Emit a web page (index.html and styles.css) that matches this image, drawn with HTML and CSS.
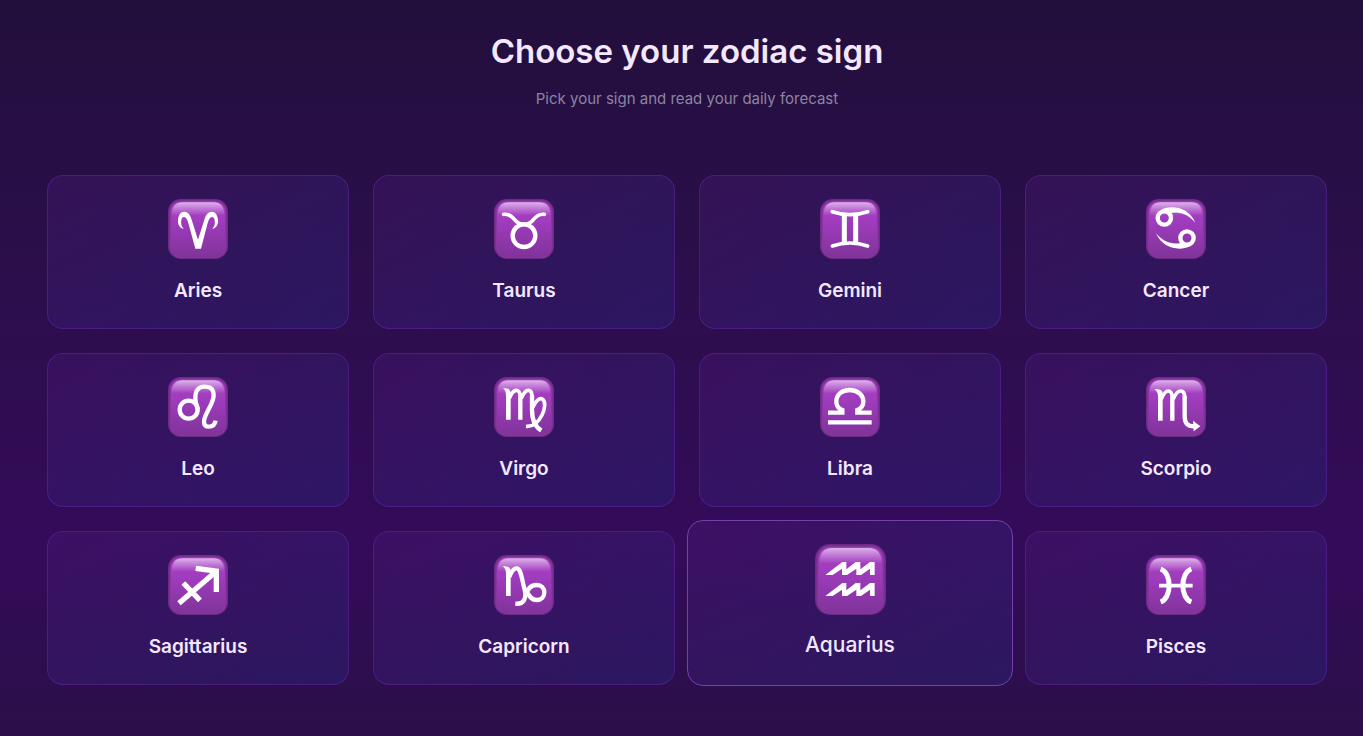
FILE: index.html
```html
<!DOCTYPE html>
<html lang="en">
<head>
    <meta charset="UTF-8">
    <meta name="viewport" content="width=device-width, initial-scale=1.0">
    <title>Choose your zodiac sign</title>
    <link rel="stylesheet" href="styles.css">
</head>
<body>
    <!-- shared tile behind every sign -->
    <svg class="defs" width="0" height="0" aria-hidden="true">
        <defs>
            <linearGradient id="tileFill" x1="0" y1="0" x2="0" y2="1">
                <stop offset="0" stop-color="#a840c6"/>
                <stop offset="0.35" stop-color="#a03cbe"/>
                <stop offset="1" stop-color="#80339a"/>
            </linearGradient>
            <linearGradient id="tileShine" x1="0" y1="0" x2="0" y2="1">
                <stop offset="0" stop-color="#fff" stop-opacity="0.6"/>
                <stop offset="0.4" stop-color="#fff" stop-opacity="0.34"/>
                <stop offset="1" stop-color="#fff" stop-opacity="0"/>
            </linearGradient>
            <symbol id="tile" viewBox="0 0 180 180">
                <rect width="180" height="180" rx="38" fill="#6d2b83"/>
                <rect x="3" y="3" width="174" height="174" rx="35" fill="#7d3093"/>
                <rect x="6" y="6" width="168" height="170" rx="32" fill="#8a36a2"/>
                <rect x="9" y="8" width="162" height="166" rx="29" fill="url(#tileFill)"/>
                <path d="M11 50C11 22 22 10 44 10H136C158 10 169 22 169 50Z" fill="url(#tileShine)"/>
            </symbol>
        </defs>
    </svg>

    <main class="container">
        <header class="header">
            <h1>Choose your zodiac sign</h1>
            <p>Pick your sign and read your daily forecast</p>
        </header>

        <nav class="signs" aria-label="Zodiac signs">
            <a class="card" href="#aries">
                <svg class="icon" viewBox="0 0 180 180" aria-hidden="true">
                    <use href="#tile"/>
                    <path class="solid" d="M47 90C34 87 29 76 30 64C31 48 38 38 49 38C61 38 67 49 71 62L90 122L109 62C113 49 119 38 131 38C142 38 149 48 150 64C151 76 146 87 133 90C140 82 142 73 140 64C139 57 136 54 132 54C126 54 122 62 119 72L99 149H82L61 72C58 62 54 54 48 54C44 54 41 57 40 64C38 73 40 82 47 90Z"/>
                </svg>
                <span class="name">Aries</span>
            </a>
            <a class="card" href="#taurus">
                <svg class="icon" viewBox="0 0 180 180" aria-hidden="true">
                    <use href="#tile"/>
                    <circle class="line" cx="90" cy="110" r="34"/>
                    <path class="line thin round" d="M29 46C44 44 54 52 62 62C70 73 78 76 90 76C102 76 110 73 118 62C126 52 136 44 151 46"/>
                </svg>
                <span class="name">Taurus</span>
            </a>
            <a class="card" href="#gemini">
                <svg class="icon" viewBox="0 0 180 180" aria-hidden="true">
                    <use href="#tile"/>
                    <path class="line thin round" d="M37 38Q90 56 143 38M37 141Q90 123 143 141"/>
                    <path class="line bold" d="M73 46V132M107 46V132"/>
                </svg>
                <span class="name">Gemini</span>
            </a>
            <a class="card" href="#cancer">
                <svg class="icon" viewBox="0 0 180 180" aria-hidden="true">
                    <use href="#tile"/>
                    <circle class="line" cx="55" cy="57" r="20"/>
                    <path class="solid" d="M46 32C78 17 128 25 148 71C126 46 102 36 74 42Z"/>
                    <circle class="line" cx="123" cy="117" r="20"/>
                    <path class="solid" d="M132 142C100 157 50 149 30 103C52 128 76 138 104 132Z"/>
                </svg>
                <span class="name">Cancer</span>
            </a>
            <a class="card" href="#leo">
                <svg class="icon" viewBox="0 0 180 180" aria-hidden="true">
                    <use href="#tile"/>
                    <circle class="line" cx="62" cy="98" r="27"/>
                    <path class="line" d="M90 98C78 68 76 29 110 29C139 29 142 52 131 78C122 100 108 118 108 134C108 146 115 149 123 149C134 149 141 142 143 131"/>
                </svg>
                <span class="name">Leo</span>
            </a>
            <a class="card" href="#virgo">
                <svg class="icon" viewBox="0 0 180 180" aria-hidden="true">
                    <use href="#tile"/>
                    <path class="solid" d="M27 34C42 34 48 36 50 46V128H36V58C36 46 34 40 27 34Z"/>
                    <path class="line thin" d="M46 64C53 47 60 39 68 40C75 41 78 48 79 58M82 64C89 47 96 39 104 40C111 41 114 48 114 58"/>
                    <path class="line" d="M79 54V128M114 54V98C114 132 128 152 142 160"/>
                    <path class="line thin" d="M116 92C124 72 136 62 145 66C156 74 153 96 144 114C132 138 118 150 96 148"/>
                </svg>
                <span class="name">Virgo</span>
            </a>
            <a class="card" href="#libra">
                <svg class="icon" viewBox="0 0 180 180" aria-hidden="true">
                    <use href="#tile"/>
                    <path class="line" d="M24 107H67V99C54 94 49 85 49 74C49 53 66 39 89 39C112 39 130 53 130 74C130 85 124 94 112 99V107H155M24 136H155"/>
                </svg>
                <span class="name">Libra</span>
            </a>
            <a class="card" href="#scorpio">
                <svg class="icon" viewBox="0 0 180 180" aria-hidden="true">
                    <use href="#tile"/>
                    <path class="solid" d="M25 36C41 36 48 38 50 48V131H36V60C36 48 33 42 25 36Z"/>
                    <path class="line thin" d="M46 66C53 49 60 41 68 42C75 43 78 50 79 60M82 66C89 49 96 41 105 42C112 43 116 50 116 60"/>
                    <path class="line" d="M79 56V131M116 56V118C116 138 124 148 144 148"/>
                    <path class="solid" d="M141 131L163 148L143 163Z"/>
                </svg>
                <span class="name">Scorpio</span>
            </a>
            <a class="card" href="#sagittarius">
                <svg class="icon" viewBox="0 0 180 180" aria-hidden="true">
                    <use href="#tile"/>
                    <path class="line thick" d="M33 145L145 49M46 84L96 136"/>
                    <path class="line thick" d="M83 40L145 48V111"/>
                </svg>
                <span class="name">Sagittarius</span>
            </a>
            <a class="card" href="#capricorn">
                <svg class="icon" viewBox="0 0 180 180" aria-hidden="true">
                    <use href="#tile"/>
                    <path class="solid" d="M26 34C42 34 48 36 50 46V123H36V58C36 46 34 40 26 34Z"/>
                    <path class="line" d="M46 66C53 47 61 39 69 40C82 42 84 78 92 104C99 132 88 149 64 146"/>
                    <path class="line" d="M94 124C100 100 112 90 128 90C142 90 151 99 151 112C151 126 142 135 128 135C112 135 104 122 96 106"/>
                </svg>
                <span class="name">Capricorn</span>
            </a>
            <a class="card active" href="#aquarius">
                <svg class="icon" viewBox="0 0 213 213" aria-hidden="true">
                    <use href="#tile"/>
                    <path class="solid" d="M31 93L82 54H94V76L122 54H136V76L165 54H179V93H165V74L138 93H124V74L96 93H81V74L53 93Z"/>
                    <path class="solid" d="M31 156L82 117H94V139L122 117H136V139L165 117H179V156H165V137L138 156H124V137L96 156H81V137L53 156Z"/>
                </svg>
                <span class="name">Aquarius</span>
            </a>
            <a class="card" href="#pisces">
                <svg class="icon" viewBox="0 0 180 180" aria-hidden="true">
                    <use href="#tile"/>
                    <path class="line bold" d="M44 42C78 54 78 128 44 141M136 42C102 54 102 128 136 141"/>
                    <path class="line thin" d="M39 92H140"/>
                </svg>
                <span class="name">Pisces</span>
            </a>
        </nav>
    </main>
</body>
</html>
```
FILE: styles.css
```css
* {
    box-sizing: border-box;
}
body {
    margin: 0;
    min-height: 100vh;
    font-family: Inter, "Liberation Sans", sans-serif;
    color: #f3e8ff;
    background: linear-gradient(to bottom, #220f3c 0%, #2c0e4c 40%, #340b5a 74%, #2b0f49 100%);
}
.defs {
    display: block;
}
.container {
    padding: 27px 36px 48px 47px;
}
.header {
    text-align: center;
    margin-bottom: 64px;
}
h1 {
    margin: 0 0 12px;
    font-size: 33px;
    font-weight: 600;
    line-height: 48px;
}
.header p {
    margin: 0;
    font-size: 15px;
    line-height: 24px;
    color: #8d85a0;
}
.signs {
    display: grid;
    grid-template-columns: repeat(4, 1fr);
    gap: 24px;
}
.card {
    display: flex;
    flex-direction: column;
    align-items: center;
    gap: 18px;
    padding: 23px 24px;
    border: 1px solid rgba(107, 45, 190, 0.4);
    border-radius: 16px;
    color: #f3e8ff;
    text-decoration: none;
    background: linear-gradient(to bottom right, rgba(80, 26, 122, 0.32), rgba(42, 34, 115, 0.5));
}
.icon {
    display: block;
    width: 60px;
    height: 60px;
}
.name {
    font-size: 19px;
    font-weight: 600;
    line-height: 28px;
}
/* selected card grows into the gaps round it */
.card.active {
    gap: 16px;
    margin: -11px -12px -1px;
    border-color: #7440ac;
}
.active .icon {
    width: 71px;
    height: 71px;
}
.active .name {
    font-size: 21px;
    font-weight: 500;
}
.solid {
    fill: #fff;
}
.line {
    fill: none;
    stroke: #fff;
    stroke-width: 13;
}
.thin {
    stroke-width: 11;
}
.bold {
    stroke-width: 15;
}
.thick {
    stroke-width: 16;
}
.round {
    stroke-linecap: round;
}
```
